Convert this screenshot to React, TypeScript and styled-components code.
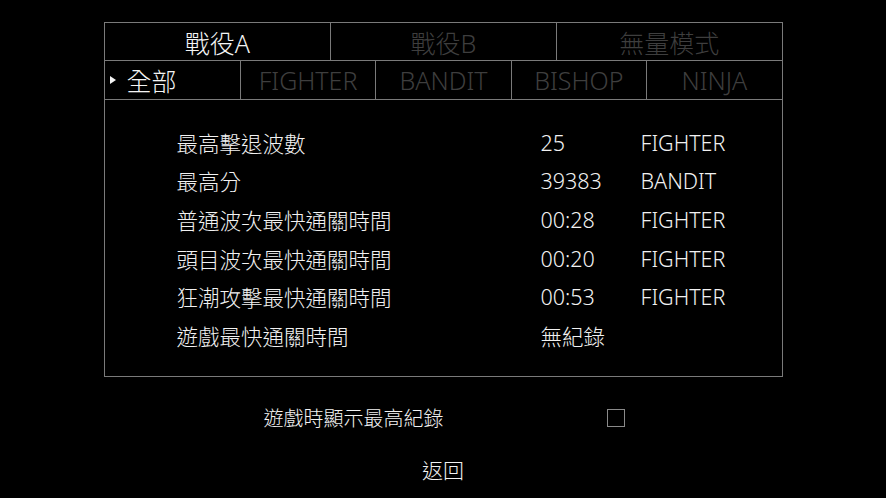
import * as React from "react";
import styled, { createGlobalStyle } from "styled-components";

const GlobalStyle = createGlobalStyle`
  html, body {
    margin: 0;
    padding: 0;
    background: #000;
  }
  body {
    font-family: "Noto Sans", "Noto Sans CJK TC", sans-serif;
    font-weight: 300;
    color: #f2f2f2;
  }
`;

type Record = {
  label: string;
  value: string;
  hero?: string;
};

const modes = ["戰役A", "戰役B", "無量模式"];
const classes = ["全部", "FIGHTER", "BANDIT", "BISHOP", "NINJA"];

const records: Record[] = [
  { label: "最高擊退波數", value: "25", hero: "FIGHTER" },
  { label: "最高分", value: "39383", hero: "BANDIT" },
  { label: "普通波次最快通關時間", value: "00:28", hero: "FIGHTER" },
  { label: "頭目波次最快通關時間", value: "00:20", hero: "FIGHTER" },
  { label: "狂潮攻擊最快通關時間", value: "00:53", hero: "FIGHTER" },
  { label: "遊戲最快通關時間", value: "無紀錄" },
];

export default function App() {
  const [mode, setMode] = React.useState(0);
  const [cls, setCls] = React.useState(0);
  const [showInGame, setShowInGame] = React.useState(false);

  return (
    <Screen>
      <GlobalStyle />
      <Panel>
        <TabRow $count={modes.length}>
          {modes.map((name, i) => (
            <ModeTab key={name} $active={i === mode} onClick={() => setMode(i)}>
              {name}
            </ModeTab>
          ))}
        </TabRow>
        <TabRow $count={classes.length}>
          {classes.map((name, i) => (
            <ClassTab key={name} $active={i === cls} onClick={() => setCls(i)}>
              {i === cls && <Cursor />}
              {name}
            </ClassTab>
          ))}
        </TabRow>
        <Records>
          {records.map((r) => (
            <RecordRow key={r.label}>
              <span>{r.label}</span>
              <span>{r.value}</span>
              <span>{r.hero}</span>
            </RecordRow>
          ))}
        </Records>
      </Panel>

      <OptionRow onClick={() => setShowInGame((v) => !v)}>
        <span>遊戲時顯示最高紀錄</span>
        <Checkbox $checked={showInGame} />
      </OptionRow>

      <BackButton>返回</BackButton>
    </Screen>
  );
}

const Screen = styled.div`
  width: 886px;
  height: 498px;
  display: flex;
  flex-direction: column;
  align-items: center;
  padding-top: 22px;
  box-sizing: border-box;
`;

const Panel = styled.div`
  width: 679px;
  height: 355px;
  box-sizing: border-box;
  border: 1px solid #7a7a7a;
  display: flex;
  flex-direction: column;
`;

const TabRow = styled.div<{ $count: number }>`
  display: grid;
  grid-template-columns: repeat(${(p) => p.$count}, 1fr);
  border-bottom: 1px solid #7a7a7a;
`;

const ModeTab = styled.div<{ $active: boolean }>`
  height: 37px;
  display: flex;
  align-items: center;
  justify-content: center;
  font-size: 25px;
  color: ${(p) => (p.$active ? "#f4f4f4" : "#3e3e3e")};
  cursor: pointer;

  & + & {
    border-left: 1px solid #7a7a7a;
  }
`;

const ClassTab = styled(ModeTab)`
  height: 38px;
  justify-content: ${(p) => (p.$active ? "flex-start" : "center")};
  padding-left: ${(p) => (p.$active ? "5px" : "0")};
  gap: 11px;
`;

const Cursor = styled.span`
  width: 0;
  height: 0;
  border-top: 4.5px solid transparent;
  border-bottom: 4.5px solid transparent;
  border-left: 6px solid #f4f4f4;
`;

const Records = styled.div`
  display: flex;
  flex-direction: column;
  padding-top: 23px;
`;

const RecordRow = styled.div`
  display: grid;
  grid-template-columns: 364px 100px 1fr;
  padding-left: 72px;
  height: 38.6px;
  align-items: center;
  font-size: 21.5px;
`;

const OptionRow = styled.div`
  width: 361px;
  margin-top: 26px;
  margin-left: 2px;
  display: flex;
  align-items: center;
  justify-content: space-between;
  font-size: 20px;
  cursor: pointer;
`;

const Checkbox = styled.span<{ $checked: boolean }>`
  width: 16px;
  height: 16px;
  border: 1px solid #8a8a8a;
  background: ${(p) => (p.$checked ? "#f4f4f4" : "transparent")};
`;

const BackButton = styled.div`
  margin-top: 22px;
  font-size: 21px;
  cursor: pointer;
`;
